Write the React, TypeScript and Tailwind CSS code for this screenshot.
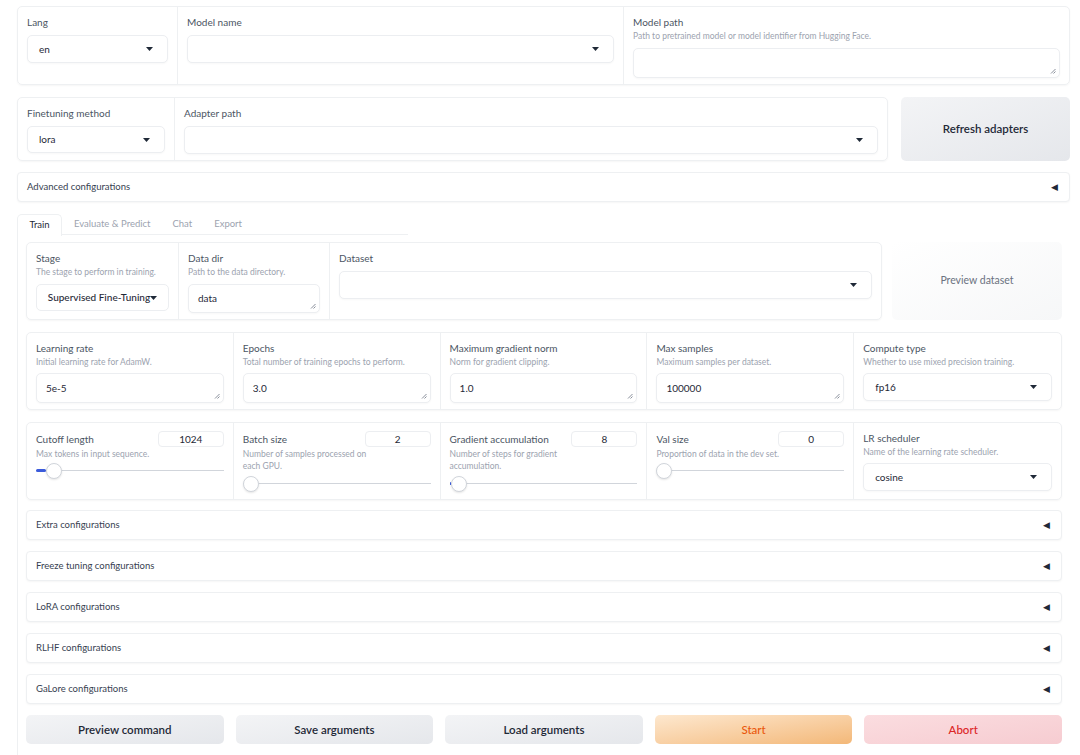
import React from 'react';

const font = { fontFamily: 'Lato, "Noto Sans", sans-serif' };

function Caret() {
  return (
    <svg width="7" height="4" viewBox="0 0 7 4" className="shrink-0">
      <path d="M0 0h7L3.5 4z" fill="#1f2937" />
    </svg>
  );
}

function Grip() {
  return (
    <svg width="6" height="6" viewBox="0 0 6 6" className="absolute right-[3px] bottom-[3px]">
      <path d="M5.5 1L1 5.5M5.5 3.5L3.5 5.5" stroke="#6b7280" strokeWidth="0.8" />
    </svg>
  );
}

function Label({ children }: { children: React.ReactNode }) {
  return <div className="text-[10px] leading-[14px] text-[#4b5563]">{children}</div>;
}

function Desc({ children }: { children: React.ReactNode }) {
  return <div className="text-[8.5px] leading-[12px] text-[#9ca3af] mt-[1px]">{children}</div>;
}

function Select({ value, className = '' }: { value?: string; className?: string }) {
  return (
    <div
      className={`flex items-center justify-between border border-[#eceef1] rounded-[5px] bg-white pl-[11px] pr-[14px] shadow-[0_1px_2px_rgba(0,0,0,0.03)] ${className}`}>
      <span className="text-[10px] text-[#1f2937]">{value}</span>
      <Caret />
    </div>
  );
}

function TextBox({ value, className = '' }: { value?: string; className?: string }) {
  return (
    <div
      className={`relative flex items-center border border-[#eceef1] rounded-[5px] bg-white px-[9px] shadow-[0_1px_2px_rgba(0,0,0,0.03)] ${className}`}>
      <span className="text-[10px] text-[#1f2937]">{value}</span>
      <Grip />
    </div>
  );
}

function Accordion({ title }: { title: string }) {
  return (
    <div className="flex items-center justify-between h-[30px] border border-[#eef0f2] rounded-[4px] bg-white pl-[9px] pr-[11px] shadow-[0_1px_2px_rgba(0,0,0,0.04)]">
      <span className="text-[9.5px] text-[#374151]">{title}</span>
      <span className="text-[9px] text-[#1f2937]">◀</span>
    </div>
  );
}

function Slider({ label, value, desc, pct, twoLine }: { label: string; value: string; desc: string; pct: number; twoLine?: boolean }) {
  return (
    <div className="px-[9px] pt-[8px] flex flex-col">
      <div className="flex items-center justify-between h-[16px]">
        <Label>{label}</Label>
        <div className="w-[66px] h-[16px] border border-[#eceef1] rounded-[4px] flex items-center justify-center text-[10px] text-[#1f2937]">
          {value}
        </div>
      </div>
      <div className={twoLine ? 'w-[125px]' : ''}>
        <Desc>{desc}</Desc>
      </div>
      <div className={`relative h-[16px] ${twoLine ? 'mt-[4px]' : 'mt-[3px]'}`}>
        <div className="absolute left-0 right-0 top-[7px] h-[1px] bg-[#d1d5db]" />
        <div className="absolute left-0 top-[6px] h-[3px] bg-[#3b5bdb] rounded" style={{ width: `${pct}px` }} />
        <div
          className="absolute top-0 w-[16px] h-[16px] rounded-full bg-white border border-[#d1d5db] shadow-[0_1px_2px_rgba(0,0,0,0.1)]"
          style={{ left: `${pct}px` }}
        />
      </div>
    </div>
  );
}

function Field({ label, desc, children }: { label: string; desc?: string; children: React.ReactNode }) {
  return (
    <div className="px-[9px] pt-[8px] flex flex-col">
      <Label>{label}</Label>
      {desc && <Desc>{desc}</Desc>}
      {children}
    </div>
  );
}

const grayBtn =
  'rounded-[5px] bg-gradient-to-br from-[#f3f4f6] to-[#e5e7eb] text-[11.5px] font-semibold text-[#1f2937]';

export default function App() {
  return (
    <div className="w-[1080px] h-[755px] overflow-hidden bg-white pl-[17px] pr-[10px]" style={font}>
      {/* model row */}
      <div className="mt-[6px] h-[79px] flex border border-[#eef0f2] rounded-[5px] shadow-[0_1px_2px_rgba(0,0,0,0.04)]">
        <div className="w-[160px] border-r border-[#eef0f2] px-[9px] pt-[8px]">
          <Label>Lang</Label>
          <Select value="en" className="mt-[6px] h-[28px]" />
        </div>
        <div className="w-[446px] border-r border-[#eef0f2] px-[9px] pt-[8px]">
          <Label>Model name</Label>
          <Select className="mt-[6px] h-[28px]" />
        </div>
        <div className="flex-1 px-[9px] pt-[8px]">
          <Label>Model path</Label>
          <Desc>Path to pretrained model or model identifier from Hugging Face.</Desc>
          <TextBox className="mt-[6px] h-[30px]" />
        </div>
      </div>

      {/* adapter row */}
      <div className="mt-[12px] h-[64px] flex gap-[13px]">
        <div className="w-[871px] flex border border-[#eef0f2] rounded-[5px] shadow-[0_1px_2px_rgba(0,0,0,0.04)]">
          <div className="w-[157px] border-r border-[#eef0f2] px-[9px] pt-[8px]">
            <Label>Finetuning method</Label>
            <Select value="lora" className="mt-[6px] h-[27px]" />
          </div>
          <div className="flex-1 px-[9px] pt-[8px]">
            <Label>Adapter path</Label>
            <Select className="mt-[6px] h-[28px]" />
          </div>
        </div>
        <button className={`flex-1 ${grayBtn}`}>Refresh adapters</button>
      </div>

      <div className="mt-[11px]">
        <Accordion title="Advanced configurations" />
      </div>

      {/* tabs */}
      <div className="mt-[12px] flex items-end h-[21px] text-[9.5px]">
        <div className="h-[22px] w-[45px] flex items-center justify-center border border-b-0 border-[#eef0f2] rounded-t-[5px] bg-white text-[#1f2937] relative top-[1px]">
          Train
        </div>
        <div className="flex items-center h-[21px] text-[#9ca3af] gap-[22px] pl-[12px] border-b border-[#eef0f2] w-[346px]">
          <span>Evaluate &amp; Predict</span>
          <span>Chat</span>
          <span>Export</span>
        </div>
      </div>

      <div className="border-l border-[#eef0f2] pl-[8px] pr-[8px] pt-[7px] h-[520px]">
        {/* data row */}
        <div className="h-[78px] flex gap-[10px]">
          <div className="w-[856px] flex border border-[#eef0f2] rounded-[5px] shadow-[0_1px_2px_rgba(0,0,0,0.04)]">
            <div className="w-[152px] border-r border-[#eef0f2]">
              <Field label="Stage" desc="The stage to perform in training.">
                <div className="mt-[6px] h-[27px] flex items-center justify-center border border-[#eceef1] rounded-[5px] text-[10px] text-[#1f2937] font-medium">
                  <span>Supervised Fine-Tuning</span>
                  <Caret />
                </div>
              </Field>
            </div>
            <div className="w-[151px] border-r border-[#eef0f2]">
              <Field label="Data dir" desc="Path to the data directory.">
                <TextBox value="data" className="mt-[6px] h-[29px]" />
              </Field>
            </div>
            <div className="flex-1">
              <Field label="Dataset">
                <Select className="mt-[6px] h-[28px]" />
              </Field>
            </div>
          </div>
          <button className="flex-1 rounded-[5px] bg-gradient-to-br from-white to-[#f6f7f8] text-[10.5px] text-[#6b7280]">
            Preview dataset
          </button>
        </div>

        {/* hyper-params row */}
        <div className="mt-[12px] h-[78px] grid grid-cols-5 border border-[#eef0f2] rounded-[5px] shadow-[0_1px_2px_rgba(0,0,0,0.04)]">
          <div className="border-r border-[#eef0f2]">
            <Field label="Learning rate" desc="Initial learning rate for AdamW.">
              <TextBox value="5e-5" className="mt-[5px] h-[30px]" />
            </Field>
          </div>
          <div className="border-r border-[#eef0f2]">
            <Field label="Epochs" desc="Total number of training epochs to perform.">
              <TextBox value="3.0" className="mt-[5px] h-[30px]" />
            </Field>
          </div>
          <div className="border-r border-[#eef0f2]">
            <Field label="Maximum gradient norm" desc="Norm for gradient clipping.">
              <TextBox value="1.0" className="mt-[5px] h-[30px]" />
            </Field>
          </div>
          <div className="border-r border-[#eef0f2]">
            <Field label="Max samples" desc="Maximum samples per dataset.">
              <TextBox value="100000" className="mt-[5px] h-[30px]" />
            </Field>
          </div>
          <div>
            <Field label="Compute type" desc="Whether to use mixed precision training.">
              <Select value="fp16" className="mt-[5px] h-[28px]" />
            </Field>
          </div>
        </div>

        {/* slider row */}
        <div className="mt-[12px] h-[78px] grid grid-cols-5 border border-[#eef0f2] rounded-[5px] shadow-[0_1px_2px_rgba(0,0,0,0.04)]">
          <div className="border-r border-[#eef0f2]">
            <Slider label="Cutoff length" value="1024" desc="Max tokens in input sequence." pct={10} />
          </div>
          <div className="border-r border-[#eef0f2]">
            <Slider label="Batch size" value="2" desc="Number of samples processed on each GPU." pct={0} twoLine />
          </div>
          <div className="border-r border-[#eef0f2]">
            <Slider label="Gradient accumulation" value="8" desc="Number of steps for gradient accumulation." pct={1} twoLine />
          </div>
          <div className="border-r border-[#eef0f2]">
            <Slider label="Val size" value="0" desc="Proportion of data in the dev set." pct={0} />
          </div>
          <div>
            <Field label="LR scheduler" desc="Name of the learning rate scheduler.">
              <Select value="cosine" className="mt-[5px] h-[28px]" />
            </Field>
          </div>
        </div>

        <div className="mt-[10px] flex flex-col gap-[11px]">
          <Accordion title="Extra configurations" />
          <Accordion title="Freeze tuning configurations" />
          <Accordion title="LoRA configurations" />
          <Accordion title="RLHF configurations" />
          <Accordion title="GaLore configurations" />
        </div>

        <div className="mt-[11px] grid grid-cols-5 gap-[12px] h-[29px]">
          <button className={grayBtn}>Preview command</button>
          <button className={grayBtn}>Save arguments</button>
          <button className={grayBtn}>Load arguments</button>
          <button className="rounded-[5px] bg-gradient-to-br from-[#fde8cf] to-[#f3b878] text-[11.5px] font-medium text-[#ea580c]">
            Start
          </button>
          <button className="rounded-[5px] bg-gradient-to-br from-[#fbdde0] to-[#f6ccd1] text-[11.5px] font-medium text-[#dc2626]">
            Abort
          </button>
        </div>
      </div>
    </div>
  );
}
